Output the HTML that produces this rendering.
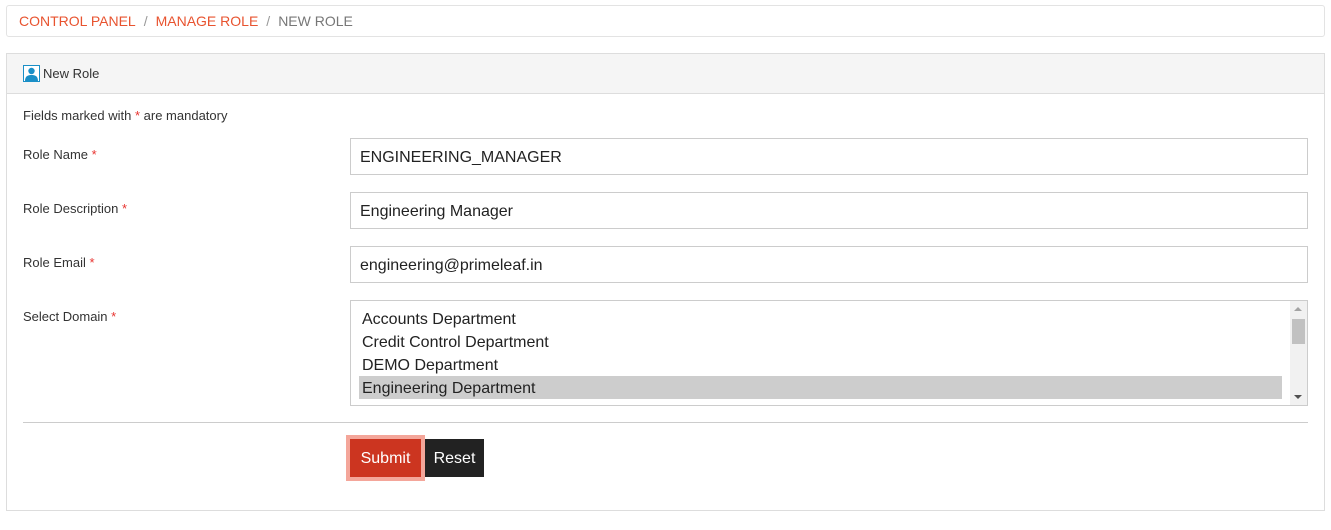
<!DOCTYPE html>
<html><head><meta charset="utf-8"><style>
*{box-sizing:border-box;margin:0;padding:0}
body{width:1331px;height:530px;background:#fff;font-family:"Liberation Sans",sans-serif;color:#333;position:relative;overflow:hidden}
.a{position:absolute}
.bc{left:6px;top:5px;width:1319px;height:32px;border:1px solid #e3e3e3;border-radius:3px;font-size:14px;line-height:31px;padding-left:12px;color:#777}
.bc span.r{color:#e8532f}
.bc span.s{color:#999;margin:0 8px}
.panel{left:6px;top:53px;width:1319px;height:458px;border:1px solid #ddd}
.hd{left:0;top:0;width:100%;height:40px;background:#f5f5f5;border-bottom:1px solid #ddd;font-size:13px;line-height:40px;padding-left:36px}
.lbl{font-size:13px;left:23px}
.st{color:#e8332f}
.in{left:350px;width:958px;height:37px;border:1px solid #ccc;font-size:16px;line-height:37px;padding-left:9px;color:#222}
</style></head><body>
<div class="a bc"><span class="r">CONTROL PANEL</span><span class="s">/</span><span class="r">MANAGE ROLE</span><span class="s">/</span>NEW ROLE</div>
<div class="a panel"><div class="a hd">New Role</div>
<svg class="a" style="left:16px;top:11px" width="17" height="17" viewBox="0 0 17 17"><rect x="0.5" y="0.5" width="16" height="16" fill="#fff" stroke="#1a8fc7"/><circle cx="8.5" cy="6" r="3.2" fill="#1a8fc7"/><path d="M2 16 C2 11 5 10 8.5 10 C12 10 15 11 15 16Z" fill="#1a8fc7"/></svg>
</div>
<div class="a lbl" style="top:108px">Fields marked with <span class="st">*</span> are mandatory</div>
<div class="a lbl" style="top:147px">Role Name <span class="st">*</span></div>
<div class="a lbl" style="top:201px">Role Description <span class="st">*</span></div>
<div class="a lbl" style="top:255px">Role Email <span class="st">*</span></div>
<div class="a lbl" style="top:309px">Select Domain <span class="st">*</span></div>
<div class="a in" style="top:138px">ENGINEERING_MANAGER</div>
<div class="a in" style="top:192px">Engineering Manager</div>
<div class="a in" style="top:246px">engineering@primeleaf.in</div>
<div class="a" style="left:350px;top:300px;width:958px;height:106px;border:1px solid #ccc;overflow:hidden;font-size:16px;color:#222">
<div class="a" style="left:8px;top:75px;width:923px;height:23px;background:#cdcdcd"></div>
<div class="a" style="left:11px;top:7px;line-height:23px">Accounts Department<br>Credit Control Department<br>DEMO Department<br>Engineering Department<br>HR Department</div>
<div class="a" style="left:939px;top:0;width:17px;height:104px;background:#f1f1f1"></div>
<div class="a" style="left:941px;top:18px;width:13px;height:25px;background:#c1c1c1"></div>
<div class="a" style="left:943px;top:6px;width:0;height:0;border-left:4px solid transparent;border-right:4px solid transparent;border-bottom:4px solid #a3a3a3"></div>
<div class="a" style="left:943px;top:94px;width:0;height:0;border-left:4px solid transparent;border-right:4px solid transparent;border-top:4px solid #505050"></div>
</div>
<div class="a" style="left:23px;top:422px;width:1285px;height:1px;background:#ccc"></div>
<div class="a" style="left:346px;top:435px;width:79px;height:46px;background:#f4a69a"></div>
<div class="a" style="left:350px;top:439px;width:71px;height:38px;background:#cc3520;color:#fff;font-size:16px;line-height:39px;text-align:center">Submit</div>
<div class="a" style="left:425px;top:439px;width:59px;height:38px;background:#222;color:#fff;font-size:16px;line-height:39px;text-align:center">Reset</div>
</body></html>
